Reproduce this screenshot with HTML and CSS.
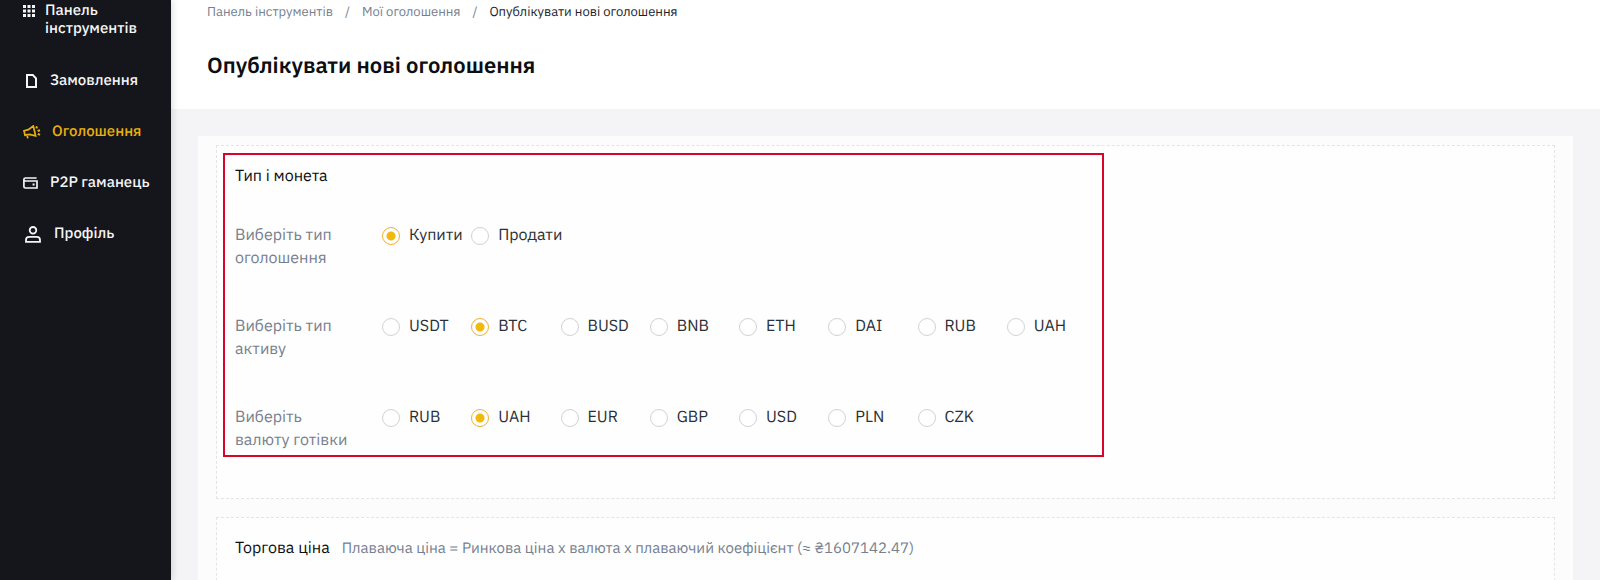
FILE: index.html
```html
<!DOCTYPE html>
<html lang="uk">
<head>
<meta charset="utf-8">
<title>Опублікувати нові оголошення</title>
<link rel="stylesheet" href="styles.css">
</head>
<body>
<div class="app">
  <nav class="sidebar">
    <a class="nav-item nav-dashboard" href="#">
      <svg class="icon-grid" viewBox="0 0 12 12" fill="currentColor"><path d="M0 0h3v3H0zM4.500 0h3v3h-3zM9 0h3v3H9zM0 4.500h3v3H0zM4.500 4.500h3v3h-3zM9 4.500h3v3H9zM0 9h3v3H0zM4.500 9h3v3h-3zM9 9h3v3H9z"/></svg>
      <span>Панель інструментів</span>
    </a>
    <a class="nav-item nav-orders" href="#">
      <svg class="icon-doc" viewBox="0 0 11 14" fill="none" stroke="currentColor" stroke-width="2"><path d="M1 1h5.800L10 4.400V13H1z"/></svg>
      <span>Замовлення</span>
    </a>
    <a class="nav-item nav-ads active" href="#">
      <svg class="icon-horn" viewBox="0 0 18 14" fill="none" stroke="currentColor" stroke-width="1.700"><path d="M10.300 1 12.600 10.900 6.300 9.400 2 10.200 1.600 8.200 1 5.800 5.300 4.600zM4 10l.8 3.400"/><path d="M13.300 3.300l.7-2M14.600 6l2.400-.8M14.800 8.800l2.200 1" stroke-width="2"/></svg>
      <span>Оголошення</span>
    </a>
    <a class="nav-item nav-wallet" href="#">
      <svg class="icon-wallet" viewBox="0 0 15 12" fill="none" stroke="currentColor" stroke-width="1.700"><path d="M13.600 1H2.600Q.9 1 .9 2.500V9.500Q.9 11 2.400 11H14V4H2.400Q.9 4 .9 2.500"/><path d="M9.600 7.500h2" stroke-width="2"/></svg>
      <span>P2P гаманець</span>
    </a>
    <a class="nav-item nav-profile" href="#">
      <svg class="icon-user" viewBox="0 0 16 17" fill="none" stroke="currentColor" stroke-width="1.800"><circle cx="8" cy="4.300" r="3.300"/><path d="M1 15.800V14q0-3.200 3.200-3.200h7.600Q15 10.800 15 14v1.800z"/></svg>
      <span>Профіль</span>
    </a>
  </nav>
  <main class="main">
    <header class="page-header">
      <nav class="breadcrumb">
        <a href="#">Панель інструментів</a><span>/</span><a href="#">Мої оголошення</a><span>/</span><a class="current" href="#">Опублікувати нові оголошення</a>
      </nav>
      <h1>Опублікувати нові оголошення</h1>
    </header>
    <form class="card">
      <section class="panel panel-type">
        <div class="highlight">
          <h2>Тип і монета</h2>
          <fieldset class="row">
            <legend class="row-label">Виберіть тип<br>оголошення</legend>
            <div class="options">
              <label class="option"><input type="radio" name="side" checked>Купити</label>
              <label class="option"><input type="radio" name="side">Продати</label>
            </div>
          </fieldset>
          <fieldset class="row">
            <legend class="row-label">Виберіть тип<br>активу</legend>
            <div class="options">
              <label class="option"><input type="radio" name="asset">USDT</label>
              <label class="option"><input type="radio" name="asset" checked>BTC</label>
              <label class="option"><input type="radio" name="asset">BUSD</label>
              <label class="option"><input type="radio" name="asset">BNB</label>
              <label class="option"><input type="radio" name="asset">ETH</label>
              <label class="option"><input type="radio" name="asset">DAI</label>
              <label class="option"><input type="radio" name="asset">RUB</label>
              <label class="option"><input type="radio" name="asset">UAH</label>
            </div>
          </fieldset>
          <fieldset class="row">
            <legend class="row-label">Виберіть<br>валюту готівки</legend>
            <div class="options">
              <label class="option"><input type="radio" name="fiat">RUB</label>
              <label class="option"><input type="radio" name="fiat" checked>UAH</label>
              <label class="option"><input type="radio" name="fiat">EUR</label>
              <label class="option"><input type="radio" name="fiat">GBP</label>
              <label class="option"><input type="radio" name="fiat">USD</label>
              <label class="option"><input type="radio" name="fiat">PLN</label>
              <label class="option"><input type="radio" name="fiat">CZK</label>
            </div>
          </fieldset>
        </div>
      </section>
      <section class="panel panel-price">
        <h2>Торгова ціна</h2>
        <p>Плаваюча ціна = Ринкова ціна x валюта x плаваючий коефіцієнт (≈ ₴1607142.47)</p>
      </section>
    </form>
  </main>
</div>
</body>
</html>
```
FILE: styles.css
```css
* { box-sizing: border-box; }
body {
  margin: 0;
  font-family: "IBM Plex Sans", Roboto, "Noto Sans", sans-serif;
  font-size: 16px;
  line-height: 23px;
  color: #2b3037;
  background: #f4f4f6;
  text-rendering: geometricPrecision;
}
h1, h2, p { margin: 0; }
a { color: inherit; text-decoration: none; }
.app { display: flex; height: 100vh; overflow: hidden; }

.sidebar {
  flex: 0 0 171px;
  display: flex;
  flex-direction: column;
  gap: 33px;
  background: #15161b;
  color: #f4f5f6;
  font-size: 15px;
  font-weight: 500;
  line-height: 18px;
  box-shadow: 0 0 8px rgba(20, 21, 26, 0.2);
  z-index: 1;
}
.nav-item { display: flex; align-items: center; padding-left: 23px; }
.nav-item svg { flex: none; }
.nav-dashboard { align-items: flex-start; gap: 10px; padding-top: 2px; padding-bottom: 1px; padding-right: 16px; }
.nav-orders { gap: 13px; padding-left: 26px; }
.nav-ads { gap: 11px; }
.nav-wallet { gap: 12px; }
.nav-profile { gap: 13px; padding-left: 25px; }
.active { color: #e9b010; }
.icon-grid { width: 12px; height: 12px; margin-top: 3px; }
.icon-doc { width: 11px; height: 14px; }
.icon-horn { width: 18px; height: 14px; }
.icon-wallet { width: 15px; height: 12px; }
.icon-user { width: 16px; height: 17px; }

.main { flex: 1; min-width: 0; }
.page-header { padding: 0 36px 27px; background: #fff; }
.breadcrumb {
  display: flex;
  gap: 12px;
  font-size: 13px;
  line-height: 24px;
  color: #76808f;
}
.breadcrumb .current { color: #1e2329; }
h1 { margin-top: 26px; font-size: 22px; line-height: 32px; font-weight: 600; color: #0c0e12; }

.card {
  margin: 27px 27px 0;
  padding: 9px 18px;
  min-height: 480px;
  background: #fcfcfc;
}
.panel { border: 1px dashed #e3e4e6; background: #fefefe; }
.panel-type { padding: 7px 6px 41px; }
.panel-price {
  display: flex;
  align-items: baseline;
  gap: 12px;
  margin-top: 18px;
  padding: 18px;
  min-height: 140px;
}
.panel-price p { font-size: 15px; color: #76808f; }
h2 { font-size: 16px; line-height: 24px; font-weight: 400; color: #0c0e12; }

.highlight {
  width: fit-content;
  padding: 9px 6px 3px 10px;
  border: 2px solid #d9042b;
}
.row {
  display: flex;
  margin: 0;
  margin-top: 45px;
  padding: 0;
  border: 0;
}
.highlight h2 + .row { margin-top: 36px; }
.row-label { float: left; width: 147px; padding: 0; color: #76808f; }
.options {
  display: grid;
  grid-template-columns: repeat(8, minmax(0, 1fr));
  width: 714px;
}
.option { display: flex; align-items: center; gap: 9px; height: 23px; white-space: nowrap; }
.option input {
  appearance: none;
  flex: none;
  width: 18px;
  height: 18px;
  margin: 0;
  border: 1px solid #d0d2d5;
  border-radius: 50%;
  background: #fff;
}
.option input:checked {
  border-color: #f0b132;
  background: radial-gradient(circle, #f0b90b 4px, #fff 5px);
}
```
